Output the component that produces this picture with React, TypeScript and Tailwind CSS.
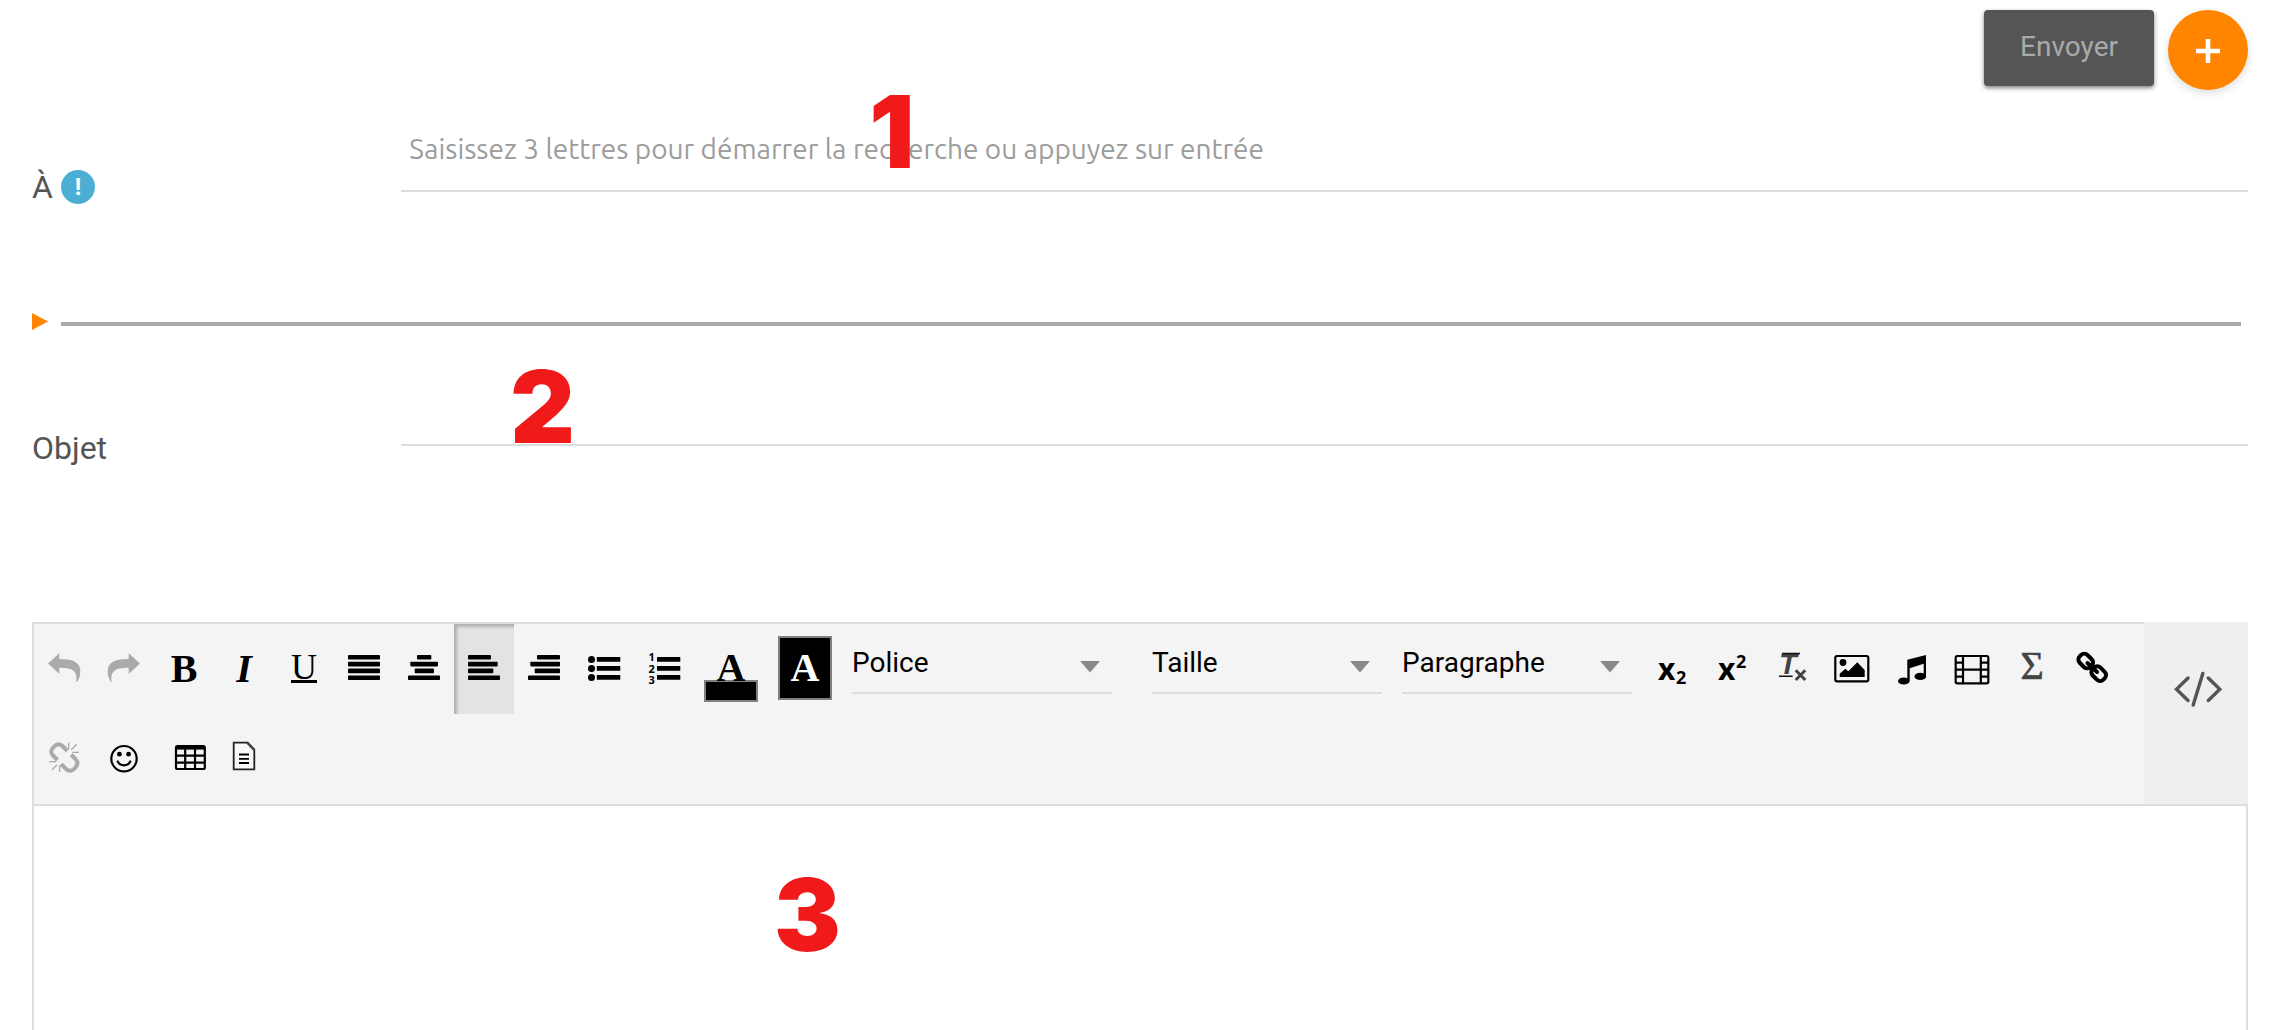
import type { ReactNode } from "react";

const INK = "#000";
const MUTED = "#aaa";

function Glyph({ children }: { children: ReactNode }) {
  return (
    <svg viewBox="0 0 40 40" className="size-10 shrink-0 overflow-visible" aria-hidden="true">
      {children}
    </svg>
  );
}

function Tool({ label, children, active = false, shifted = false }: { label: string; children: ReactNode; active?: boolean; shifted?: boolean }) {
  return (
    <button
      type="button"
      aria-label={label}
      title={label}
      aria-pressed={active}
      className={
        "flex h-[90px] w-[60px] shrink-0 items-center justify-center " +
        (shifted ? "pl-3 " : "") +
        (active ? "bg-[#e3e3e3] shadow-[inset_3px_3px_3px_rgba(0,0,0,0.22)]" : "")
      }
    >
      {children}
    </button>
  );
}

function Bars({ rows }: { rows: [number, number][] }) {
  return (
    <Glyph>
      {rows.map(([from, to], i) => (
        <rect key={i} x={from} y={6 + i * 6.8} width={to - from} height={4.6} rx={0.8} fill={INK} />
      ))}
    </Glyph>
  );
}

function ListBars({ from }: { from: number }) {
  return (
    <>
      {[8, 17, 26].map((y) => (
        <rect key={y} x={from} y={y} width={36.3 - from} height={4.8} rx={0.6} fill={INK} />
      ))}
    </>
  );
}

function Picker({ label, className }: { label: string; className: string }) {
  return (
    <div className={"relative mx-[10px] h-[70px] shrink-0 border-b-2 border-[#ddd] " + className}>
      <select aria-label={label} className="h-full w-full appearance-none bg-transparent pt-3 pb-[2px] pr-8 text-[28px] leading-8 text-black outline-none">
        <option>{label}</option>
      </select>
      <svg viewBox="0 0 20 12" className="pointer-events-none absolute right-3 top-[37px] h-3 w-5" aria-hidden="true">
        <path d="M0 0H20L10 11.5Z" fill="#888" />
      </svg>
    </div>
  );
}

function Marker({ n, className }: { n: number; className: string }) {
  return (
    <span className={"pointer-events-none absolute font-[Inter,sans-serif] text-[100px] leading-none font-black text-[#f01a1a] " + className}>
      {n}
    </span>
  );
}

const UNDO = "M4 14.5 15.3 4.3V10C28 10 36.3 12.5 36.3 22.5 36.3 27 35 30 33 33H32.3C33.8 22 29 18.7 15.3 18.7V25Z";

export default function App() {
  return (
    <main className="flex min-h-screen flex-col bg-white px-8 pt-[10px] font-[Roboto,sans-serif] text-[#555]">
      <header className="flex items-start justify-end gap-[14px]">
        <button type="button" className="h-[76px] rounded-[4px] bg-[#555] px-9 pb-[2px] text-[28px] text-[#aaa] shadow-[0_2px_4px_rgba(0,0,0,0.5)]">
          Envoyer
        </button>
        <button type="button" aria-label="Ajouter" className="flex size-20 items-center justify-center rounded-full bg-[#ff8500] shadow-[0_3px_8px_rgba(0,0,0,0.14)]">
          <svg viewBox="0 0 24 24" className="mt-[2px] size-6" aria-hidden="true">
            <path d="M12 0V24M0 12H24" stroke="#fff" strokeWidth="4.6" />
          </svg>
        </button>
      </header>

      <section className="mt-5 grid grid-cols-6 items-start">
        <div className="mt-[57px] flex h-10 items-center gap-2 text-[32px]">
          <label htmlFor="to">À</label>
          <span className="flex size-[34px] items-center justify-center rounded-full bg-[#4bafd5] text-[24px] font-bold text-white">!</span>
        </div>
        <div className="relative col-span-5">
          <input
            id="to"
            type="text"
            placeholder="Saisissez 3 lettres pour démarrer la recherche ou appuyez sur entrée"
            className="h-[82px] w-full border-b-2 border-[#ddd] px-2 pb-1 font-[Ubuntu,'Noto_Sans',sans-serif] text-[28px] outline-none placeholder:text-[#9c9c9c] placeholder:opacity-100"
          />
          <Marker n={1} className="left-[468px] top-[-28px]" />
        </div>
      </section>

      <div className="mt-[104px] flex h-5 items-center gap-[13px]">
        <button type="button" aria-label="Afficher plus de champs">
          <svg viewBox="0 0 16 17" className="h-[17px] w-4" aria-hidden="true">
            <path d="M0 0 16 8.5 0 17Z" fill="#ff8500" />
          </svg>
        </button>
        <hr className="mt-[6px] mr-[7px] h-1 flex-1 border-0 bg-[#aaa]" />
      </div>

      <section className="mt-[33px] grid grid-cols-6 items-start">
        <label htmlFor="subject" className="mt-[64px] h-10 text-[32px] leading-10">Objet</label>
        <div className="relative col-span-5">
          <input id="subject" type="text" className="h-[82px] w-full border-b-2 border-[#ddd] px-2 text-[28px] outline-none" />
          <Marker n={2} className="left-[109px] top-[-7px]" />
        </div>
      </section>

      <section className="mt-[154px] flex flex-1 flex-col">
        <div className="flex border-b-2 border-[#ddd]">
          <div role="toolbar" aria-label="Mise en forme" className="flex flex-1 flex-wrap items-start border-t-2 border-l-2 border-[#ddd] bg-[#f4f4f4] text-black">
            <Tool label="Annuler">
              <Glyph><path d={UNDO} fill={MUTED} /></Glyph>
            </Tool>
            <Tool label="Rétablir">
              <Glyph><path d={UNDO} fill={MUTED} transform="matrix(-1 0 0 1 40 0)" /></Glyph>
            </Tool>
            <Tool label="Gras">
              <span className="font-['Liberation_Serif',serif] text-[40px] leading-10 font-bold">B</span>
            </Tool>
            <Tool label="Italique">
              <span className="font-['Liberation_Serif',serif] text-[40px] leading-10 font-bold italic">I</span>
            </Tool>
            <Tool label="Souligné">
              <span className="h-7 border-b-3 border-black font-['Liberation_Serif',serif] text-[36px] leading-6">U</span>
            </Tool>
            <Tool label="Justifier"><Bars rows={[[4, 36], [4, 36], [4, 36], [4, 36]]} /></Tool>
            <Tool label="Centrer"><Bars rows={[[13, 27.3], [6.3, 34], [10.7, 30], [4, 36]]} /></Tool>
            <Tool label="Aligner à gauche" active><Bars rows={[[4, 27], [4, 33.7], [4, 29.3], [4, 36]]} /></Tool>
            <Tool label="Aligner à droite"><Bars rows={[[13, 36], [6.3, 36], [10.7, 36], [4, 36]]} /></Tool>
            <Tool label="Liste à puces">
              <Glyph>
                <circle cx="7.5" cy="10.4" r="3.5" /><circle cx="7.5" cy="19.4" r="3.5" /><circle cx="7.5" cy="28.4" r="3.5" />
                <ListBars from={12.8} />
              </Glyph>
            </Tool>
            <Tool label="Liste numérotée">
              <Glyph>
                <g className="font-['Noto_Sans',sans-serif] text-[11px] font-bold">
                  <text x="4.5" y="12">1</text><text x="4.5" y="23.5">2</text><text x="4.5" y="35">3</text>
                </g>
                <ListBars from={13} />
              </Glyph>
            </Tool>
            <button type="button" aria-label="Couleur du texte" className="mx-[10px] flex h-[90px] w-[54px] flex-col items-center pt-6">
              <span className="relative z-10 h-8 font-['Liberation_Serif',serif] text-[40px] leading-10 font-bold">A</span>
              <span className="h-[22px] w-full border-2 border-[#808080] bg-black" />
            </button>
            <button type="button" aria-label="Couleur de fond" className="mx-[10px] mt-3 flex h-16 w-[54px] items-center justify-center border-2 border-[#808080] bg-black font-['Liberation_Serif',serif] text-[40px] leading-10 font-bold text-white">
              A
            </button>
            <Picker label="Police" className="mr-[30px] w-[260px]" />
            <Picker label="Taille" className="w-[230px]" />
            <Picker label="Paragraphe" className="w-[230px]" />
            <Tool label="Indice">
              <Glyph>
                <g className="font-['Noto_Sans',sans-serif] font-bold">
                  <text x="6" y="31" fontSize="30">x</text><text x="24" y="35" fontSize="18">2</text>
                </g>
              </Glyph>
            </Tool>
            <Tool label="Exposant">
              <Glyph>
                <g className="font-['Noto_Sans',sans-serif] font-bold">
                  <text x="6" y="31" fontSize="30">x</text><text x="24" y="19" fontSize="18">2</text>
                </g>
              </Glyph>
            </Tool>
            <Tool label="Supprimer la mise en forme">
              <Glyph>
                <text x="7" y="25" fontSize="29" fill="#444" className="font-['Liberation_Sans',sans-serif] font-bold italic">T</text>
                <path d="M10 4.5H28M7 27.3H20.7" stroke="#111" strokeWidth="1.6" />
                <path d="M23.7 21.3 33.3 31M33.3 21.3 23.7 31" stroke="#444" strokeWidth="3" />
              </Glyph>
            </Tool>
            <Tool label="Image">
              <Glyph>
                <rect x="3.3" y="7" width="33" height="25.3" rx="1.8" fill="none" stroke={INK} strokeWidth="2.2" />
                <circle cx="11" cy="13.5" r="3.4" />
                <path d="M7.7 24.7 13.3 19.7 16.3 22.3 25.3 13.3 32.7 21V28H7.7Z" />
              </Glyph>
            </Tool>
            <Tool label="Son">
              <Glyph>
                <path d="M15.3 10.7 34 6V27.5H31.7V14.8L17.7 19.2V32H15.3Z" />
                <ellipse cx="11.8" cy="32" rx="5.8" ry="3.6" /><ellipse cx="28.3" cy="27.4" rx="5.8" ry="3.6" />
              </Glyph>
            </Tool>
            <Tool label="Vidéo">
              <Glyph>
                <g fill="none" stroke={INK} strokeWidth="2.2">
                  <rect x="3.7" y="7" width="32.6" height="27.4" rx="1.6" />
                  <path d="M11 7V34M28.8 7V34M11 20.7H29M3.7 13.7H11M3.7 20.7H11M3.7 27.7H11M28.8 13.7H36M28.8 20.7H36M28.8 27.7H36" />
                </g>
              </Glyph>
            </Tool>
            <Tool label="Formule">
              <Glyph>
                <text x="8.5" y="30" fontSize="40" fill="#444" stroke="#444" strokeWidth="0.6" className="font-['Liberation_Serif',serif]">Σ</text>
              </Glyph>
            </Tool>
            <Tool label="Lien">
              <Glyph>
                <g fill="none" stroke={INK} strokeWidth="4">
                  <rect x="6.2" y="6.5" width="15" height="11" rx="4.5" transform="rotate(45 13.7 12)" />
                  <rect x="19.2" y="19.2" width="15" height="11" rx="4.5" transform="rotate(45 26.7 24.7)" />
                  <path d="M15.5 14 25 23" strokeLinecap="round" />
                </g>
              </Glyph>
            </Tool>
            <Tool label="Supprimer le lien">
              <Glyph>
                <g fill="none" stroke={MUTED}>
                  <path d="M23.3 11.8 19 7.5C16 4.5 13 4.5 10 7.7 6.3 11.2 6.3 13.5 9 16.5L13.5 21" strokeWidth="4" />
                  <path d="M27.2 15.8 31.5 20C34.3 23 34.3 25.8 30.8 29.3 27.5 32.6 24.5 32.6 21.5 29.5L17.2 25.2" strokeWidth="4" />
                  <path d="M24.7 3.7V10M32.7 5.3 27.3 10.7M35 13.3H28.3M5.3 22.7H12M8 30.7 13 26M15.7 26.3V33" strokeWidth="1.3" />
                </g>
              </Glyph>
            </Tool>
            <Tool label="Émoticône">
              <Glyph>
                <circle cx="20" cy="19.7" r="12.7" fill="none" stroke={INK} strokeWidth="2.2" />
                <circle cx="15.4" cy="15.2" r="2.4" /><circle cx="24.6" cy="15.2" r="2.4" />
                <path d="M13.7 22.4C16 27.6 24 27.6 26.3 22.4" fill="none" stroke={INK} strokeWidth="2.2" strokeLinecap="round" />
              </Glyph>
            </Tool>
            <Tool label="Tableau" shifted>
              <Glyph>
                <rect x="6" y="7" width="28.8" height="23" rx="1.6" fill="none" stroke={INK} strokeWidth="2.2" />
                <path d="M6 7H35V10.6H6Z" />
                <path d="M6 16.7H35M6 23.7H35M15.2 9V30M25 9V30" stroke={INK} strokeWidth="2.2" />
              </Glyph>
            </Tool>
            <Tool label="Modèle">
              <Glyph>
                <path d="M9.7 3.7H23.5L30.3 10.8V30.3H9.7Z" fill="#fafafa" stroke="#1c2426" strokeWidth="1.8" />
                <path d="M23.2 3.7 30.3 10.8" stroke="#444" strokeWidth="2.4" />
                <path d="M15 15.5H25M15 19.8H25M15 24H25" stroke={INK} strokeWidth="1.8" />
              </Glyph>
            </Tool>
          </div>
          <button type="button" aria-label="Code source" className="flex w-[104px] shrink-0 items-start justify-center bg-[#efefef] pt-12 pl-1">
            <svg viewBox="0 0 48 38" className="h-[38px] w-12" fill="none" stroke="#555" strokeWidth="3.4" strokeLinecap="round" aria-hidden="true">
              <path d="M14 8 2.5 19.2 14 30.5M34.3 8 45.8 19.2 34.3 30.5M28.8 3.5 19.2 35" />
            </svg>
          </button>
        </div>
        <div className="relative flex flex-1">
          <textarea aria-label="Message" className="min-h-48 flex-1 resize-none border-x-2 border-[#ddd] p-5 text-[28px] text-black outline-none" />
          <Marker n={3} className="left-[742px] top-[59px]" />
        </div>
      </section>
    </main>
  );
}
